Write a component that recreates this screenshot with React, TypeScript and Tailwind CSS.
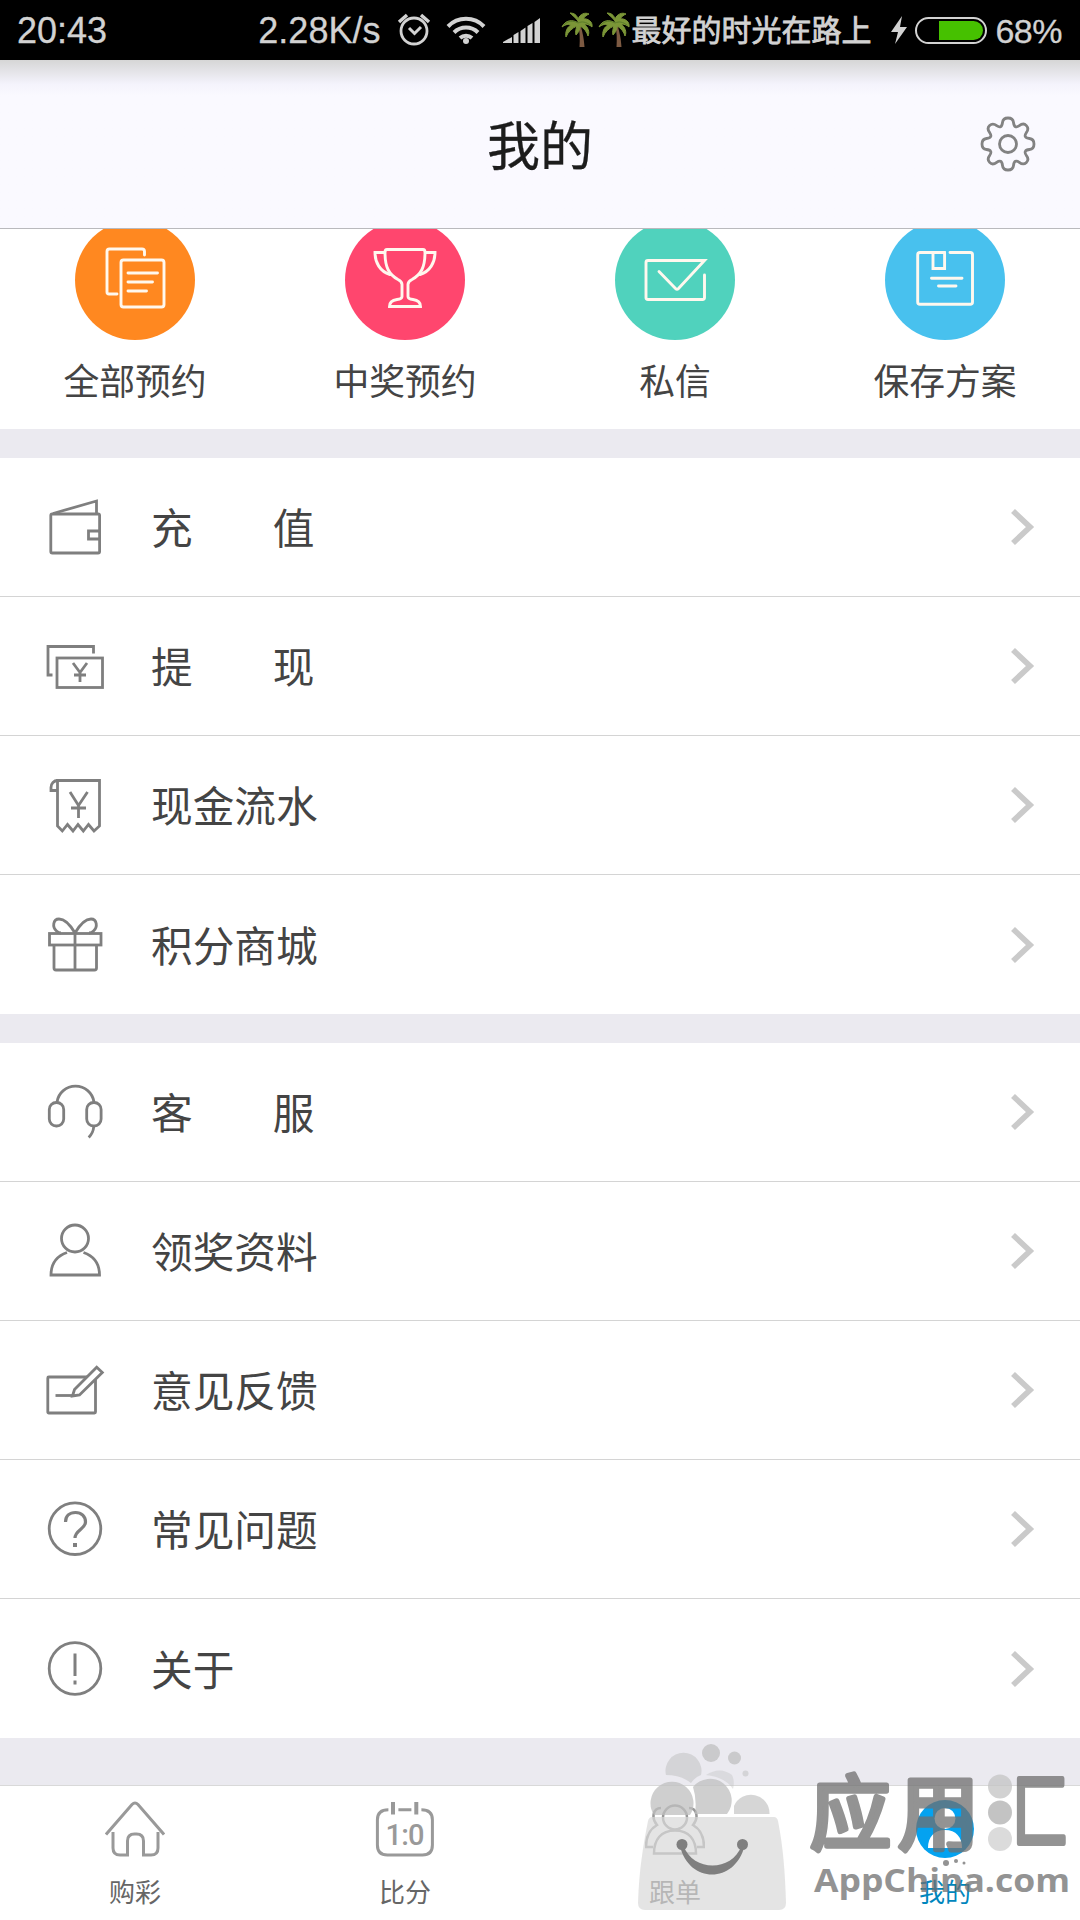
import type { ReactNode } from "react";

type Shortcut = {
  label: string;
  color: string;
  icon: ReactNode;
};

type MenuItem = {
  label: ReactNode;
  icon: ReactNode;
};

const shortcuts: Shortcut[] = [
  {
    label: "全部预约",
    color: "bg-[#ff8820]",
    icon: (
      <>
        <path d="M42 74h-8q-2 0-2-2V31.500q0-2.500 2.500-2.500h32.500q2.500 0 2.500 2.500V35" />
        <rect x="46" y="40" width="43" height="47" rx="2.500" />
        <path d="M53 53h29.500M53 62h24.500M53 71h18.500" />
      </>
    ),
  },
  {
    label: "中奖预约",
    color: "bg-[#ff466e]",
    icon: (
      <>
        <path d="M42 29.500h36q2 0 2 3c0 15-4 22-13 27q-4 2-4 5v12q0 2.500 5 3c5 .6 7.500 3 7.500 7H44.500c0-4 2.500-6.400 7.500-7q5-.5 5-3V64.500q0-3-4-5c-9-5-13-12-13-27q0-3 2-3z" />
        <path d="M39.500 32.500H30c0 10 5 19 15 22M81 32.500H90c0 10-5 19-15 22" />
      </>
    ),
  },
  {
    label: "私信",
    color: "bg-[#50d2bd]",
    icon: (
      <path d="M44 51.500 60.500 68.500q1.500 1.500 3 0L89.500 40.500H33q-2 0-2 2V77.500q0 2 2 2H87.500q2 0 2-2V55" />
    ),
  },
  {
    label: "保存方案",
    color: "bg-[#48c1ee]",
    icon: (
      <>
        <path d="M59.600 32.500H35q-2.300 0-2.300 2.300V82q0 2.300 2.300 2.300H85.200q2.300 0 2.300-2.300V34.800q0-2.300-2.300-2.300H65" />
        <path d="M48 32.500v16h11.600v-16M46.500 58.300H77M53.500 66H71" />
      </>
    ),
  },
];

// two-character labels are spread out to the width of four
const spaced = (first: string, last: string) => (
  <span className="flex w-[164px] gap-20">
    <span>{first}</span>
    <span>{last}</span>
  </span>
);

const accountItems: MenuItem[] = [
  {
    label: spaced("充", "值"),
    icon: (
      <>
        <rect x="5.800" y="18" width="48.800" height="39" rx="1.500" />
        <path d="M8 17.500 51.500 5v13M54 35H43.500v8H54" />
      </>
    ),
  },
  {
    label: spaced("提", "现"),
    icon: (
      <>
        <path d="M7.500 40H3V11.500h45.500v7" />
        <rect x="12" y="23" width="45.500" height="29.500" />
        <path d="m28 28 7 9.500 7-9.500M35 37.500V47M29 40h12" />
      </>
    ),
  },
  {
    label: "现金流水",
    icon: (
      <>
        <path d="M12.500 6.500h42V52L49 57l-5.500-6.500L38.300 57 33 50.500 28 57l-5.500-6.500L17.300 57l-4.800-5z" />
        <path d="M12.500 16.500H6v-3c0-4 3-7 6.500-7M25 18l8.500 13.500L42.500 18M33.500 31v13M26 34h15" />
      </>
    ),
  },
  {
    label: "积分商城",
    icon: (
      <>
        <rect x="4.500" y="19.500" width="51.500" height="11.500" />
        <path d="M9 31v23q0 2 2 2h38.500q2 0 2-2V31M30 19.500v36" />
        <path d="M30 19C25 10.500 20 5 14 5c-6 0-7 8-2.500 12 1.500 1.500 3 2 4.500 2M30 19c5-8.500 10-14 16-14 6 0 7 8 2.500 12-1.500 1.500-3 2-4.500 2" />
      </>
    ),
  },
];

const supportItems: MenuItem[] = [
  {
    label: spaced("客", "服"),
    icon: (
      <>
        <path d="M12 21a18.700 18.700 0 0 1 37 0M48.700 46q-.5 6-5 10.500" />
        <rect x="4.300" y="21.500" width="14.400" height="23.500" rx="7" />
        <rect x="41.700" y="21.500" width="14.400" height="23.500" rx="7" />
      </>
    ),
  },
  {
    label: "领奖资料",
    icon: (
      <>
        <circle cx="30" cy="18.500" r="13.500" />
        <path d="M22 32.500C12 36 6 44 6 55h48.500c0-11-6-19-16-22.500" />
      </>
    ),
  },
  {
    label: "意见反馈",
    icon: (
      <>
        <rect x="2.800" y="18" width="47.700" height="36" rx="1" />
        <path d="M10.500 36.500H28" />
        <path
          fill="white"
          d="M27.500 37 29.500 30.500 51.700 8.300 57.300 13.500 34.500 36z"
        />
      </>
    ),
  },
  {
    label: "常见问题",
    icon: (
      <>
        <circle cx="30" cy="30.700" r="25.800" />
        <path
          strokeWidth="3.200"
          d="M20.500 24c0-6 4-9.500 10-9.500s10 4 10 9.500c0 7-10.500 8-10.500 16"
        />
        <path strokeWidth="4" d="M30 45v4" />
      </>
    ),
  },
  {
    label: "关于",
    icon: (
      <>
        <circle cx="30" cy="30.500" r="25.800" />
        <path strokeWidth="3" d="M30 15.500V38M30 42.500v4" />
      </>
    ),
  },
];

function PalmIcon() {
  return (
    <svg width="33" height="36" viewBox="0 0 33 36">
      <path
        d="M17 12c2 8 2 15 1.500 23h5C23 26 21 17 18.500 11z"
        fill="#7d5a42"
      />
      <path
        d="M17 11C12 7 4 8 1 15c4-3 7-3 9-2-4 2-6 7-5 12 2-5 6-9 11-11-1 3-2 6-1 9 2-2 4-5 4-9 4 2 7 6 8 10 2-4 0-9-4-12 3 0 6 1 8 3 1-5-4-9-9-8 2-3 4-4 6-5-4-2-9 0-11 5-1-4-4-6-8-6 2 2 6 5 8 8z"
        fill="#7b9637"
        stroke="#7b9637"
      />
      <path
        d="M17 11C12 8 6 9 3 13M17 11c4-2 8-1 12 2"
        stroke="#5b7c2a"
        fill="none"
      />
    </svg>
  );
}

function StatusBar() {
  return (
    <div className="flex h-[60px] shrink-0 items-center bg-black pr-[18px] pl-[17px] text-[36px] leading-none text-[#d2d2d2] [-webkit-text-stroke:0.3px_#d2d2d2]">
      <span className="mt-[2px] mr-auto">20:43</span>
      <span className="mt-[2px]">2.28K/s</span>
      <svg
        className="ml-[17px]"
        width="34"
        height="34"
        viewBox="0 0 34 34"
        fill="none"
        stroke="#d2d2d2"
        strokeWidth="2.800"
      >
        <circle cx="17" cy="18" r="13" />
        <path d="m12 15 5.500 5.500L24 14" strokeWidth="3" />
        <path d="M2 9 10 2M32 9 24 2" strokeWidth="3.500" />
      </svg>
      <svg
        className="ml-[15px]"
        width="40"
        height="30"
        viewBox="0 0 40 30"
        fill="none"
        stroke="#d2d2d2"
        strokeWidth="4"
      >
        <path d="M2 11.500a25 25 0 0 1 36 0M8 17.500a17 17 0 0 1 24 0M14 23a9 9 0 0 1 12 0" />
        <circle cx="20" cy="26" r="3" fill="#d2d2d2" stroke="none" />
      </svg>
      <svg
        className="ml-[17px]"
        width="40"
        height="28"
        viewBox="0 0 40 28"
        fill="#d2d2d2"
      >
        <path d="M0 27v-1l9-5v6zM10.500 27v-8l5-3v11zM17.500 27V15l5-3.500V27zM24.500 27v-17l5-3V27zM31.500 27V6l5.500-4v25z" />
      </svg>
      <div className="ml-[18px] flex gap-1">
        <PalmIcon />
        <PalmIcon />
      </div>
      <span className="mt-px text-[30px] [-webkit-text-stroke:0.8px_#d2d2d2]">
        最好的时光在路上
      </span>
      <svg
        className="ml-[19px]"
        width="18"
        height="30"
        viewBox="0 0 18 30"
        fill="#d2d2d2"
      >
        <path d="M12 1 1 17h7L5 29 17 12h-7z" />
      </svg>
      <div className="ml-[7px] flex h-[27px] w-[72px] justify-end rounded-full border-2 border-[#d2d2d2] p-[2px]">
        <div className="w-11 rounded-r-full bg-[#46c100]" />
      </div>
      <span className="mt-px ml-2 text-[34px] tracking-[-0.500px]">68%</span>
    </div>
  );
}

function Header() {
  return (
    <header className="grid h-[169px] shrink-0 grid-cols-3 items-center border-b border-[#b9b9bd] bg-[#faf9ff] bg-linear-to-b from-[#d6d6d6] via-[#f4f3fc] via-[24px] to-[#faf9ff] to-[36px] px-[44px]">
      <h1 className="col-start-2 pt-[7px] text-center text-[53px] leading-none text-[#1c1c1c] [-webkit-text-stroke:0.3px_#1c1c1c]">
        我的
      </h1>
      <svg
        className="justify-self-end"
        width="56"
        height="56"
        viewBox="-28 -28 56 56"
        fill="none"
        stroke="#828282"
        strokeWidth="2.800"
        strokeLinejoin="round"
      >
        <circle r="8.500" />
        <path d="M-5.500-21.500Q-5-26 0-26T5.500-21.500C6-17 8-16 11.300-18.300Q15.500-21.500 18.400-18.400T18.300-11.300C16-8 17-6 21.500-5.500Q26-5 26 0T21.500 5.500C17 6 16 8 18.300 11.300Q21.500 15.500 18.400 18.400T11.300 18.300C8 16 6 17 5.500 21.500Q5 26 0 26T-5.500 21.500C-6 17-8 16-11.300 18.300Q-15.500 21.500-18.400 18.400T-18.300 11.300C-16 8-17 6-21.500 5.500Q-26 5-26 0T-21.500-5.500C-17-6-16-8-18.300-11.300Q-21.500-15.500-18.400-18.400T-11.300-18.300C-8-16-6-17-5.500-21.500z" />
      </svg>
    </header>
  );
}

function MenuList({ items }: { items: MenuItem[] }) {
  return (
    <ul className="bg-white">
      {items.map((item, index) => (
        <li
          key={index}
          className="flex h-[139px] items-center border-b border-[#d4d4d4] pr-[45px] pl-[45px] last:border-0"
        >
          <svg
            className="-mt-[2px]"
            width="60"
            height="60"
            viewBox="0 0 60 60"
            fill="none"
            stroke="#7f7f7f"
            strokeWidth="2.800"
          >
            {item.icon}
          </svg>
          <span className="mt-[6px] ml-[46px] text-[41.700px] leading-none text-[#444]">
            {item.label}
          </span>
          <svg
            className="ml-auto"
            width="26"
            height="40"
            viewBox="0 0 26 40"
            fill="none"
            stroke="#cacaca"
            strokeWidth="5.700"
          >
            <path d="m4 4 17 16L4 36" />
          </svg>
        </li>
      ))}
    </ul>
  );
}

function TabBar() {
  return (
    <nav className="grid h-[135px] shrink-0 grid-cols-4 border-t border-[#d9d9d9] bg-white text-[26px] text-[#666]">
      <div className="flex flex-col items-center pt-[14px]">
        <svg
          width="60"
          height="60"
          viewBox="0 0 60 60"
          fill="none"
          stroke="#999"
          strokeWidth="3"
        >
          <path d="M1 34.500 27 4.500q3-3 6 0l26 30" />
          <path d="M8 32v16q0 7 7 7h7.500V41q0-7 7-7h2q7 0 7 7v14H46q7 0 7-7V32" />
        </svg>
        <span className="mt-[20px] leading-none">购彩</span>
      </div>
      <div className="flex flex-col items-center pt-[14px]">
        <svg
          width="60"
          height="60"
          viewBox="0 0 60 60"
          fill="none"
          stroke="#999"
          strokeWidth="3"
        >
          <path d="M13.400 9.700q-11 0-11 10V45q0 10 10 10h35q10 0 10-10V19.700q0-10-11-10M23.400 9.700h13" />
          <path d="M18 2v12.500M41.300 2v12.500" strokeWidth="4" />
          <text
            x="30"
            y="44.500"
            textAnchor="middle"
            textLength="39"
            className="fill-[#999] stroke-none font-['Roboto'] text-[29px] font-medium"
          >
            1:0
          </text>
        </svg>
        <span className="mt-[20px] leading-none">比分</span>
      </div>
      <div className="flex flex-col items-center pt-[14px]">
        <svg
          width="60"
          height="60"
          viewBox="0 0 60 60"
          fill="none"
          stroke="#999"
          strokeWidth="2.500"
        >
          <circle cx="30" cy="17.500" r="12" />
          <path d="M9 53.500c0-14 7-23 21-23s21 9 21 23z" />
          <path d="M16 8C8 8 6 18 12 25 5 29 1 37 1 47h7M44 8c8 0 10 10 4 17 7 4 11 12 11 22h-7" />
        </svg>
        <span className="mt-[20px] leading-none">跟单</span>
      </div>
      <div className="flex flex-col items-center pt-[14px] text-[#0086bd]">
        <svg width="60" height="60" viewBox="0 0 60 60">
          <circle cx="30" cy="29" r="29" fill="#04a2f0" />
          <circle cx="30" cy="18.500" r="10.500" fill="white" />
          <path d="M13 48c0-11 6-18 17-18s17 7 17 18z" fill="white" />
        </svg>
        <span className="mt-[20px] leading-none">我的</span>
      </div>
    </nav>
  );
}

function Watermark() {
  return (
    <svg
      className="absolute right-0 bottom-0"
      width="450"
      height="180"
      viewBox="630 1740 450 180"
    >
      <g fill="#c0c0c0" opacity="0.750">
        <path d="M654 1815a21.500 21.500 0 1 1 36 0z" />
        <path d="M693 1787a20 20 0 1 1 34 27h-32q2-15-2-27z" />
        <path
          d="M734 1814v-8a18.500 18.500 0 0 1 35.500 8z"
          opacity="0.850"
        />
        <path
          d="M666 1775a18 18 0 1 1 35 0q-6 2-10 8-10-8-25-8z"
          opacity="0.700"
        />
        <circle cx="711" cy="1753" r="9" />
        <circle cx="734.500" cy="1758" r="6.500" />
        <circle cx="745.500" cy="1773.500" r="3" opacity="0.700" />
        <path
          d="M706 1775q14-9 26 0 3 6 1 14-8-12-27-14z"
          opacity="0.500"
        />
      </g>
      <path
        d="M652 1817h122q3 0 4 4c5 25 7 50 8 82q0 7-7 7H645q-7 0-7-7c1-32 5-57 10-82q1-4 4-4z"
        fill="#d8d8d8"
        opacity="0.700"
      />
      <g fill="#7f7f7f">
        <circle cx="682" cy="1844.500" r="5.500" />
        <circle cx="742.500" cy="1844.500" r="5.500" />
        <path d="M680 1846c9 38 55 38 64.500 0l-3 0c-10 26-48 26-58 0z" />
      </g>
      <g fill="#6f6f6f" stroke="#6f6f6f" opacity="0.750">
        <text
          x="810"
          y="1843"
          textLength="169"
          strokeWidth="5.500"
          strokeLinejoin="round"
          className="text-[81px]"
        >
          应用
        </text>
        <text
          x="1012"
          y="1842"
          strokeWidth="6"
          strokeLinejoin="round"
          textLength="57"
          lengthAdjust="spacingAndGlyphs"
          className="text-[82px]"
        >
          匚
        </text>
        <text
          x="814"
          y="1892"
          strokeWidth="0"
          textLength="256"
          lengthAdjust="spacingAndGlyphs"
          className="font-['Open_Sans'] text-[33px] font-bold"
        >
          AppChina.com
        </text>
        <g stroke="none">
          <circle cx="946" cy="1863" r="3" />
          <circle cx="956" cy="1861" r="2" />
          <circle cx="964" cy="1863" r="1.500" />
        </g>
      </g>
      <g fill="#c4c4c4" opacity="0.750">
        <circle cx="1000" cy="1786.500" r="12" />
        <circle cx="1000" cy="1812.500" r="12" fill="#b0b0b0" />
        <circle cx="1000" cy="1839" r="12" fill="#d0d0d0" />
      </g>
    </svg>
  );
}

export default function App() {
  return (
    <div className="relative flex h-[1920px] w-[1080px] flex-col overflow-hidden bg-[#ebeaf0] font-['Liberation_Sans','Noto_Sans_CJK_SC',sans-serif]">
      <StatusBar />
      <Header />
      <main className="flex grow flex-col gap-[29px] overflow-hidden">
        <section className="grid h-[200px] shrink-0 grid-cols-4 overflow-hidden bg-white">
          {shortcuts.map((item) => (
            <div key={item.label} className="flex flex-col items-center">
              <div
                className={`-mt-[9px] size-[120px] shrink-0 rounded-full ${item.color}`}
              >
                <svg
                  width="120"
                  height="120"
                  viewBox="0 0 120 120"
                  fill="none"
                  stroke="#fff8ee"
                  strokeWidth="2.900"
                  strokeLinecap="round"
                >
                  {item.icon}
                </svg>
              </div>
              <span className="mt-[26px] text-[35.800px] leading-none text-[#444]">
                {item.label}
              </span>
            </div>
          ))}
        </section>
        <MenuList items={accountItems} />
        <MenuList items={supportItems} />
      </main>
      <TabBar />
      <Watermark />
    </div>
  );
}
